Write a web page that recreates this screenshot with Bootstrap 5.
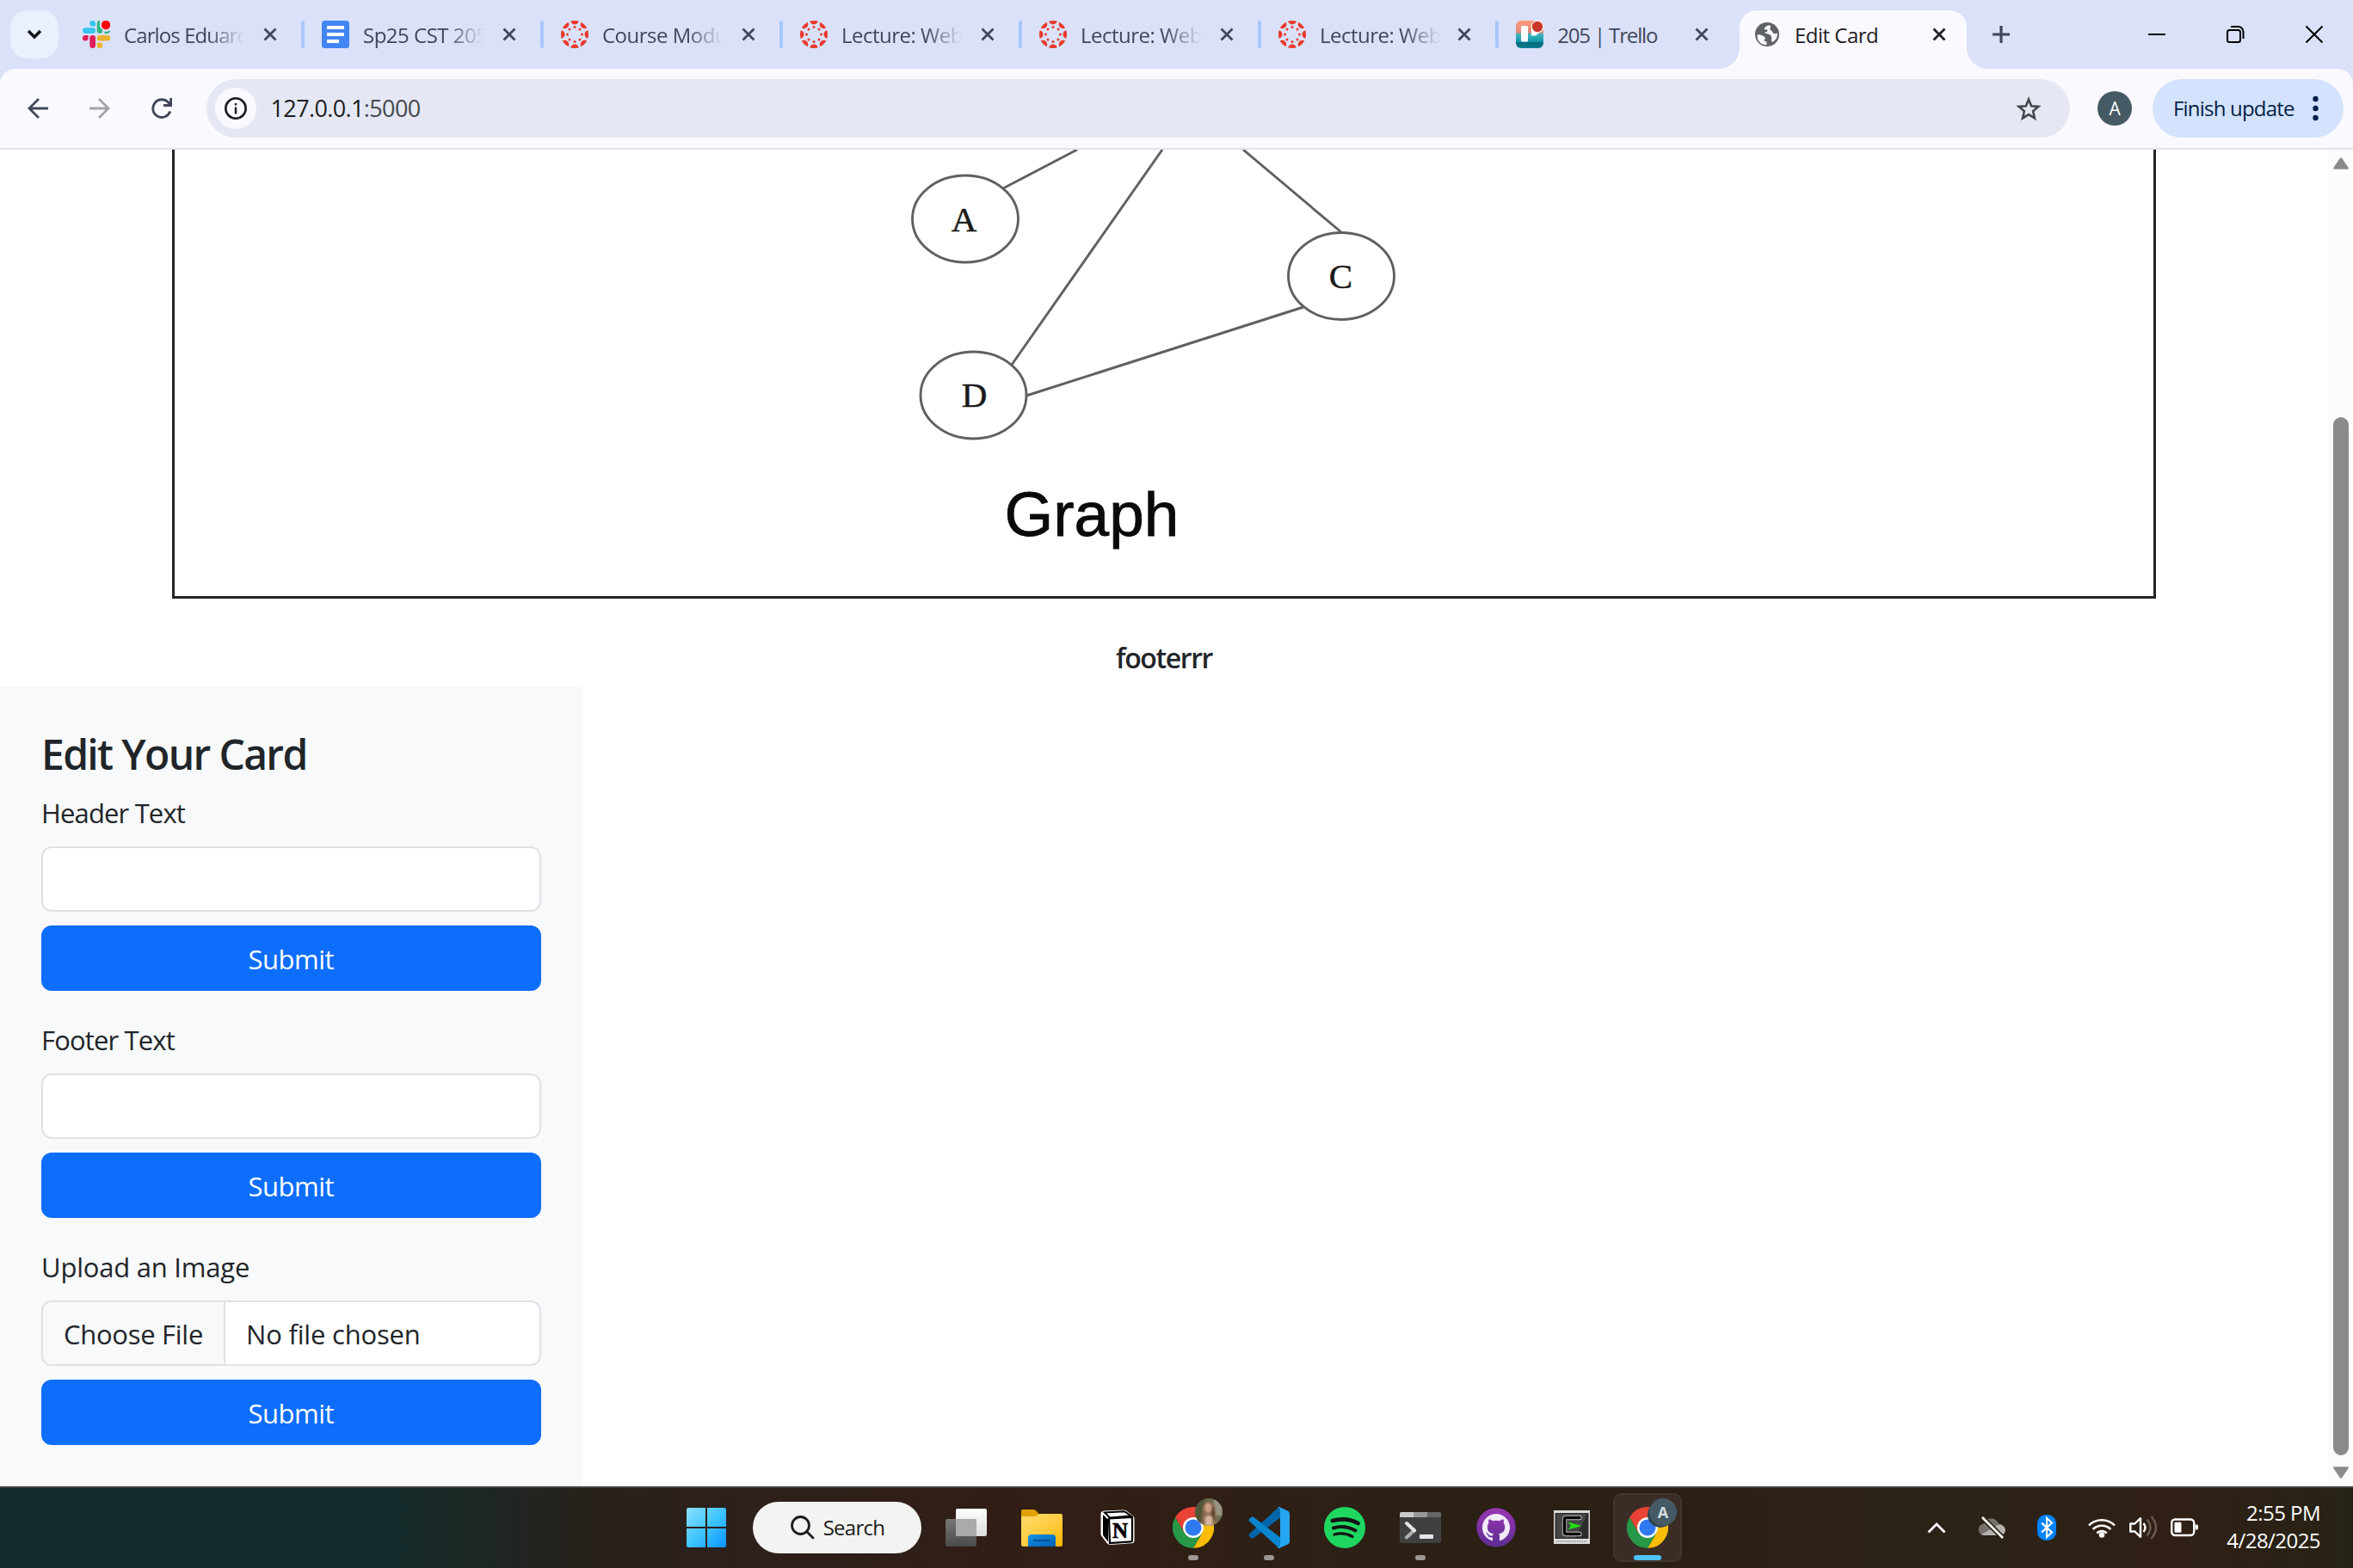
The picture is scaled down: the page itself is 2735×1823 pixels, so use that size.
<!DOCTYPE html>
<html lang="en">
<head>
<meta charset="utf-8">
<title>Edit Card</title>
<link rel="stylesheet" href="https://cdn.jsdelivr.net/npm/bootstrap@5.3.0/dist/css/bootstrap.min.css">
<script src="https://cdn.jsdelivr.net/npm/bootstrap@5.3.0/dist/js/bootstrap.bundle.min.js"></script>
<style>
html{font-size:32px}
body{width:2735px;height:1823px;overflow:hidden;font-family:"Open Sans","Noto Sans",sans-serif;font-size:31px;line-height:48px;letter-spacing:-.5px;color:#212529;background:#fff}
svg{display:block;flex:none}
/* tab strip */
.strip{height:80px;background:#dae1f9;font-size:24px;line-height:32px;letter-spacing:-.5px;color:#41475a}
.tabsearch{width:56px;height:56px;margin:0 8px 0 12px;border-radius:20px;background:#ebf0ff}
.btab{width:278px;padding-left:20px}
.btab .ttl{width:162px;margin-left:16px}
.btab.slim{width:276.2px}
.btab.slim .ttl{width:160.200px}
.ttl{white-space:nowrap;position:relative;top:1px}
.faded{-webkit-mask-image:linear-gradient(90deg,#000 98px,transparent 140px);mask-image:linear-gradient(90deg,#000 98px,transparent 140px)}
.tight{letter-spacing:-.9px}
.tsep{width:4px;height:32px;border-radius:2px;background:#a8c7fa}
.btab-on{width:264px;height:68px;margin:12px 0 0 3.600px;padding:0 24px 12px 16px;border-radius:20px 20px 0 0;background:#faf9ff;color:#1f2024;position:relative}
.btab-on::before,.btab-on::after{content:"";position:absolute;bottom:0;width:24px;height:24px}
.btab-on::before{left:-24px;background:radial-gradient(circle at 0 0,transparent 23.5px,#faf9ff 24px)}
.btab-on::after{right:-24px;background:radial-gradient(circle at 100% 0,transparent 23.5px,#faf9ff 24px)}
.newtab{margin-left:30px}
.winbtns{margin-right:35px;gap:71px}
/* toolbar */
.toolwrap{background:#dae1f9}
.toolbar{height:94px;background:#faf9ff;border-bottom:2px solid #e0e3ef;border-radius:18px 18px 0 0;padding:0 11px 0 32px;color:#41475a}
.navs{gap:48px;width:208px}
.omni{width:2166px;height:68px;border-radius:34px;background:#e5e8f4;padding:0 33px 0 10px;font-size:27px;letter-spacing:-.62px;color:#1b1c20}
.omni .port{color:#46474e}
.infodot{width:48px;height:48px;background:#faf9ff;margin-right:16.500px}
.ava{width:40px;height:40px;margin-left:32px;background:#455a64;color:#fff;font-size:21px}
.finish{width:222px;height:68px;border-radius:34px;margin-left:24px;background:#d3e3fd;color:#041e49;font-size:24px;letter-spacing:-.8px;padding:0 29px 0 24px}
/* page */
.viewport-row{height:1554px}
.pagecol{width:2706px}
.frame{width:2306px;height:522px;border:3px solid #212529;border-top:0}
.foot{font-size:32px;line-height:38.4px;font-weight:600;letter-spacing:-1.4px;padding-top:49.500px;margin-bottom:14.500px}
.editor{background:#f8f9fa}
.editor h2{font-size:48px;line-height:57.6px;font-weight:600;letter-spacing:-1.65px;padding-top:1.5px;margin-bottom:14.500px}
.editor .form-label{display:block;letter-spacing:-.85px;padding-top:1px;margin-bottom:15px}
.editor .form-control{font-size:31px;line-height:48px;border-width:2px;height:76px;padding-top:13px;padding-bottom:11px;letter-spacing:-.2px}
.editor .form-control::file-selector-button{letter-spacing:-.28px;border-inline-end-width:2px;padding-top:13px;padding-bottom:11px;margin-top:-13px;margin-bottom:-11px}
.editor .btn{font-size:31px;line-height:48px;border-width:2px;letter-spacing:-.5px;padding-top:13px;padding-bottom:11px}
.editor .lbl-up{letter-spacing:-.22px}
.sbar{width:29px;background:#fcfcfc;padding:9px 0}
.sthumb{width:18px;height:1207px;margin:288px 0 13px;border-radius:9px;background:#8b8b8b}
/* taskbar */
.taskbar{height:95px;border-top:2px solid #474441;color:#fff;background:linear-gradient(90deg,#152b2e 0,#132b2c 440px,#27211b 680px,#2e1f1b 900px,#311e14 1250px,#2c2015 1600px,#2b2015 2000px,#2b2317 2300px,#301f15 2520px,#262315 2735px);padding-left:777px;padding-bottom:1px;font-size:24px;line-height:32px}
.slot{width:88px;height:80px;position:relative}
.slot .pip{position:absolute;bottom:2px;left:38px;width:12px;height:6px;border-radius:3px;background:#9f9793}
.slot .pip-on{left:28px;width:32px;background:#4cc2ff}
.tile{width:80px;height:80px;border:2px solid #45362d;border-radius:10px;background:#3b2d25}
.sbox{width:196px;height:60px;border-radius:30px;background:#f3f3f1;color:#1b1b1b;letter-spacing:-.75px;padding-left:44px;margin:0 8px 0 10px}
.sbox span{margin-left:6px}
.tray{margin-left:281px}
.clock{width:142px;text-align:right;letter-spacing:-.55px;padding-bottom:3px}
</style>
</head>
<body class="d-flex flex-column">
<svg width="0" height="0" class="position-absolute">
<defs>
<symbol id="x" viewBox="0 0 16 16"><path d="M1.5 1.5l13 13M14.500 1.500l-13 13" stroke="currentColor" stroke-width="2.800" fill="none"/></symbol>
<symbol id="canvas" viewBox="0 0 32 32"><clipPath id="cc"><circle cx="16" cy="16" r="16"/></clipPath>
<g fill="#e8392b" clip-path="url(#cc)"><circle cx="16" cy="-.5" r="5"/><circle cx="16" cy="32.500" r="5"/><circle cx="-.5" cy="16" r="5"/><circle cx="32.500" cy="16" r="5"/><circle cx="4.300" cy="4.300" r="5"/><circle cx="27.700" cy="4.300" r="5"/><circle cx="4.300" cy="27.700" r="5"/><circle cx="27.700" cy="27.700" r="5"/>
<circle cx="16" cy="7.500" r="1.500"/><circle cx="16" cy="24.500" r="1.500"/><circle cx="7.500" cy="16" r="1.500"/><circle cx="24.500" cy="16" r="1.500"/><circle cx="10" cy="10" r="1.500"/><circle cx="22" cy="10" r="1.500"/><circle cx="10" cy="22" r="1.500"/><circle cx="22" cy="22" r="1.500"/></g></symbol>
<symbol id="chrome" viewBox="0 0 48 48"><path d="M24 24L3.200 12A24 24 0 0 1 44.800 12z" fill="#ea4335"/><path d="M24 12H44.800A24 24 0 0 1 24 48L34.400 30z" fill="#fbbc04"/><path d="M13.600 30L3.200 12A24 24 0 0 0 24 48L34.400 30 24 34z" fill="#279847"/><path d="M3.200 12l10.400 18L24 24V12z" fill="#ea4335"/><circle cx="24" cy="24" r="12" fill="#fff"/><circle cx="24" cy="24" r="9.500" fill="#2f7af0"/></symbol>
</defs></svg>

<div class="strip d-flex align-items-center">
  <div class="tabsearch d-flex align-items-center justify-content-center"><svg width="18" height="12" viewBox="0 0 18 12"><path d="M2 2l7 7 7-7" fill="none" stroke="#111318" stroke-width="3.500"/></svg></div>

  <div class="btab d-flex align-items-center"><svg width="32" height="32" viewBox="0 0 32 32"><g fill="#36c5f0"><rect x="0" y="8.300" width="15" height="6.600" rx="3.300"/><path d="M11.700 0a3.300 3.300 0 0 1 3.300 3.300v3.300h-3.300a3.300 3.300 0 0 1 0-6.600z"/></g><path d="M20 0a3.300 3.300 0 0 0-3.300 3.300v8.300a3.300 3.300 0 0 0 6.600 0L20 7zM25.400 15v-2.500c2 1 5 0 6.400-1.500A3.300 3.300 0 0 1 28.700 15z" fill="#2eb67d"/><g fill="#ecb22e"><rect x="16.700" y="17" width="15.300" height="6.600" rx="3.300"/><path d="M16.700 25.400H20a3.300 3.300 0 1 1-3.300 3.300z"/></g><g fill="#e01e5a"><rect x="8.300" y="17" width="6.700" height="15" rx="3.300"/><path d="M6.600 17v3.300A3.300 3.300 0 1 1 3.300 17z"/></g><circle cx="27" cy="5" r="6.300" fill="#dae1f9"/><circle cx="27" cy="5" r="5.200" fill="#f00"/></svg><div class="ttl faded tight">Carlos Eduard</div><svg width="16" height="16"><use href="#x"/></svg><div class="tsep ms-auto"></div></div>

  <div class="btab d-flex align-items-center"><svg width="32" height="32" viewBox="0 0 32 32"><rect width="32" height="32" rx="3.500" fill="#4285f4"/><path d="M6 8h20M6 16h20M6 24h14" stroke="#fff" stroke-width="4"/></svg><div class="ttl faded">Sp25 CST 205</div><svg width="16" height="16"><use href="#x"/></svg><div class="tsep ms-auto"></div></div>

  <div class="btab d-flex align-items-center"><svg width="32" height="32"><use href="#canvas"/></svg><div class="ttl faded">Course Modu</div><svg width="16" height="16"><use href="#x"/></svg><div class="tsep ms-auto"></div></div>

  <div class="btab d-flex align-items-center"><svg width="32" height="32"><use href="#canvas"/></svg><div class="ttl faded">Lecture: Web</div><svg width="16" height="16"><use href="#x"/></svg><div class="tsep ms-auto"></div></div>

  <div class="btab d-flex align-items-center"><svg width="32" height="32"><use href="#canvas"/></svg><div class="ttl faded">Lecture: Web</div><svg width="16" height="16"><use href="#x"/></svg><div class="tsep ms-auto"></div></div>

  <div class="btab slim d-flex align-items-center"><svg width="32" height="32"><use href="#canvas"/></svg><div class="ttl faded">Lecture: Web</div><svg width="16" height="16"><use href="#x"/></svg><div class="tsep ms-auto"></div></div>

  <div class="btab slim d-flex align-items-center"><svg width="32" height="32" viewBox="0 0 32 32"><defs><linearGradient id="tr" x2="0" y2="1"><stop offset="0" stop-color="#ff9a7b"/><stop offset=".42" stop-color="#e08a78"/><stop offset=".5" stop-color="#3fb5bd"/><stop offset=".78" stop-color="#0d93a8"/><stop offset=".8" stop-color="#04687a"/><stop offset="1" stop-color="#067f92"/></linearGradient></defs><rect width="32" height="32" rx="6" fill="url(#tr)"/><rect x="6" y="6" width="8" height="18.500" rx="1.500" fill="#fff"/><path d="M18 6h8v9q-2 2.500-5 2.500H18z" fill="#fff"/><circle cx="25" cy="7" r="7.300" fill="#fff"/><circle cx="25" cy="7" r="6.200" fill="#c9372c"/></svg><div class="ttl" style="letter-spacing:-1.15px">205 | Trello</div><svg width="16" height="16"><use href="#x"/></svg></div>

  <div class="btab-on d-flex align-items-center"><svg width="32" height="32" viewBox="0 0 32 32"><circle cx="16" cy="16" r="14" fill="#5f6368"/><path d="M4.500 16.500c3.500-.5 6 .5 8.500 2.500 2 1.500-.5 3-.5 4.500l3 1v3.800C8.500 28.500 4 23 4.500 16.500zM17.500 5.500c-2 .5-5 2.500-4.500 4.500 1 1.500 3-.5 3.500 1 0 2-1.500 2.500-3.500 3 1 1.500 5 .5 7.500 3.500 1.500 2-.5 5 1.500 7.500 4-2 6.500-6 5.800-10.500-2 1-4.800 1-5.300-1s-2.500-1.500-3-3.500 1.500-2.500 0-4.500z" fill="#faf9ff"/></svg><div class="ttl ms-2 me-auto">Edit Card</div><svg width="16" height="16"><use href="#x"/></svg></div>

  <svg class="newtab" width="20" height="20" viewBox="0 0 20 20"><path d="M10 0v20M0 10h20" stroke="#41475a" stroke-width="3.200"/></svg>
  <div class="winbtns ms-auto d-flex align-items-center">
    <svg width="20" height="20" viewBox="0 0 20 20"><path d="M0 10h20" stroke="#000" stroke-width="2"/></svg>
    <svg width="21" height="20" viewBox="0 0 21 20" fill="none" stroke="#000" stroke-width="2"><rect x="1" y="5" width="15" height="14" rx="2.500"/><path d="M5 1h8.500a6 6 0 0 1 6 6v8"/></svg>
    <svg width="20" height="20" viewBox="0 0 20 20"><path d="M.5.5l19 19M19.500.5l-19 19" stroke="#000" stroke-width="2"/></svg>
  </div>
</div>

<div class="toolwrap"><div class="toolbar d-flex align-items-center">
  <div class="navs d-flex">
    <svg width="24" height="24" viewBox="0 0 24 24" fill="none" stroke="#41475a" stroke-width="2.800"><path d="M24 12H2.500M13 1L2 12l11 11"/></svg>
    <svg width="24" height="24" viewBox="0 0 24 24" fill="none" stroke="#a3a4a9" stroke-width="2.800"><path d="M0 12h21.500M11 1l11 11-11 11"/></svg>
    <svg width="24" height="24" viewBox="0 0 24 24" fill="none" stroke="#41475a" stroke-width="2.900"><path d="M21.800 15.500A10.300 10.300 0 1 1 20 5.500l2.500 3M22.600 0v8.500H14"/></svg>
  </div>
  <div class="omni d-flex align-items-center">
    <div class="infodot rounded-circle d-flex align-items-center justify-content-center"><svg width="26" height="26" viewBox="0 0 26 26"><circle cx="13" cy="13" r="11.700" fill="none" stroke="#1b1c20" stroke-width="2.600"/><path d="M13 11.500v8M13 7v2.600" stroke="#1b1c20" stroke-width="2.400"/></svg></div>
    <div>127.0.0.1<span class="port">:5000</span></div>
    <svg class="ms-auto" width="30" height="29" viewBox="0 0 30 29"><path d="M15 3.500l3.100 7.700 8.300.7-6.300 5.400 1.900 8.100-7-4.300-7 4.300 1.900-8.100-6.300-5.400 8.300-.7z" fill="none" stroke="#46474e" stroke-width="2.600"/></svg>
  </div>
  <div class="ava rounded-circle d-flex align-items-center justify-content-center">A</div>
  <div class="finish d-flex align-items-center justify-content-between text-nowrap"><span>Finish update</span><svg width="7" height="30" viewBox="0 0 7 30" fill="#041e49"><circle cx="3.500" cy="4" r="3.200"/><circle cx="3.500" cy="15" r="3.200"/><circle cx="3.500" cy="26" r="3.200"/></svg></div>
</div></div>

<div class="viewport-row d-flex">
  <main class="pagecol">
    <div class="frame mx-auto">
      <svg width="2300" height="519" viewBox="203 174 2300 519">
        <g fill="none" stroke="#606060" stroke-width="2.900"><path d="M1252 174l-86 45M1351 174l-175 250M1445 174l114 96M1193 460l322-103"/><ellipse cx="1122" cy="254.500" rx="61.500" ry="50.500"/><ellipse cx="1559" cy="321" rx="61.500" ry="50.500"/><ellipse cx="1131.500" cy="459.500" rx="61.500" ry="50.500"/></g>
        <g font-family="Liberation Serif, serif" font-size="41" fill="#1a1a1a" stroke="#1a1a1a" stroke-width=".5" text-anchor="middle" letter-spacing="0"><text x="1120.500" y="269">A</text><text x="1558.500" y="334.500">C</text><text x="1132.500" y="473">D</text></g>
        <text x="1167.500" y="623" font-family="Liberation Sans, sans-serif" font-size="73" letter-spacing="0" fill="#0a0a0a" stroke="#0a0a0a" stroke-width=".8">Graph</text>
      </svg>
    </div>
    <h5 class="foot text-center">footerrr</h5>
    <section class="editor col-3 p-4">
      <h2>Edit Your Card</h2>
      <div class="mb-3"><label class="form-label">Header Text</label><input type="text" class="form-control"><button class="btn btn-primary w-100 mt-2">Submit</button></div>
      <div class="mb-3"><label class="form-label">Footer Text</label><input type="text" class="form-control"><button class="btn btn-primary w-100 mt-2">Submit</button></div>
      <div><label class="form-label lbl-up">Upload an Image</label><input type="file" class="form-control"><button class="btn btn-primary w-100 mt-2">Submit</button></div>
    </section>
  </main>
  <div class="sbar d-flex flex-column align-items-center">
    <svg width="18" height="14" viewBox="0 0 18 14"><path d="M9 1.500L16.500 12.500h-15z" fill="#8b8b8b" stroke="#8b8b8b" stroke-width="2.500" stroke-linejoin="round"/></svg>
    <div class="sthumb"></div>
    <svg width="18" height="14" viewBox="0 0 18 14"><path d="M9 12.500L16.500 1.500h-15z" fill="#8b8b8b" stroke="#8b8b8b" stroke-width="2.500" stroke-linejoin="round"/></svg>
  </div>
</div>

<footer class="taskbar d-flex align-items-center">
  <div class="slot d-flex align-items-center justify-content-center"><svg width="46" height="46" viewBox="0 0 46 46"><defs><linearGradient id="wn" gradientUnits="userSpaceOnUse" x1="0" y1="0" x2="46" y2="46"><stop offset="0" stop-color="#8ce0ff"/><stop offset=".5" stop-color="#3fc5ff"/><stop offset="1" stop-color="#0a94ff"/></linearGradient></defs><path d="M2 0h20v22H0V2q0-2 2-2zM24 0h20q2 0 2 2v20H24zM0 24h22v22H2q-2 0-2-2zM24 24h22v20q0 2-2 2H24z" fill="url(#wn)"/></svg></div>
  <div class="sbox d-flex align-items-center"><svg class="me-1" width="28" height="28" viewBox="0 0 28 28" fill="none" stroke="#1b1b1b" stroke-width="2.800" stroke-linecap="round"><circle cx="11.500" cy="11.500" r="10"/><path d="M18.500 18.500l7.500 7.500"/></svg><span class="ms-0 ps-0">&#8202;Search</span></div>

  <div class="slot d-flex align-items-center justify-content-center"><svg width="48" height="44" viewBox="0 0 48 44"><defs><linearGradient id="tv" x2="0" y2="1"><stop offset="0" stop-color="#fff"/><stop offset="1" stop-color="#dcdcdc"/></linearGradient><linearGradient id="tg" x2="0" y2="1"><stop offset="0" stop-color="#767676"/><stop offset="1" stop-color="#4b4b4b"/></linearGradient></defs><rect y="12" width="36" height="32" rx="2" fill="url(#tg)"/><rect x="12" width="36" height="32" rx="2" fill="url(#tv)"/><path d="M12 12h24v20H14q-2 0-2-2z" fill="#aaa"/></svg></div>

  <div class="slot d-flex align-items-center justify-content-center"><svg width="48" height="44" viewBox="0 0 48 44"><defs><linearGradient id="fo" x2="1" y2="1"><stop offset="0" stop-color="#ffdb6e"/><stop offset=".6" stop-color="#ffca38"/><stop offset="1" stop-color="#f5b400"/></linearGradient><linearGradient id="fb" x2="1" y2="1"><stop offset="0" stop-color="#1491e0"/><stop offset="1" stop-color="#0260b8"/></linearGradient></defs><path d="M0 3q0-2 2-2h12q2 0 4 2l3 4v6H0z" fill="#dfa000"/><path d="M0 9h15q2 0 4-1.500L21 6h25q2 0 2 2v34q0 2-2 2H2q-2 0-2-2z" fill="url(#fo)"/><path d="M8 44V34q0-4 4-4h24q4 0 4 4v10z" fill="url(#fb)"/><path d="M14 37h19" stroke="#084b91" stroke-width="2"/></svg></div>

  <div class="slot d-flex align-items-center justify-content-center"><svg width="40" height="42" viewBox="0 0 40 42"><path d="M4 1.500L27 .5q2 0 4 1.500l7 5.500q1.500 1 1.500 3V36q0 3-3 3.200L12 41q-3 .2-4.500-2L1.500 31Q.5 30 .5 28V5Q.5 2 4 1.500z" fill="#fff"/><path d="M3 6l6 5.500v26L3.500 30.500Q3 30 3 28z" fill="#000"/><path d="M5 3.500l22-1.300q1.500 0 3 1.300l5.500 4L11 9.500z" fill="#fff" stroke="#000" stroke-width="2"/><path d="M10 10.500l27-1.700V36q0 1.300-1.500 1.400L11 39z" fill="#fff" stroke="#000" stroke-width="2.200"/><text x="23" y="32.500" text-anchor="middle" font-family="Liberation Serif, serif" font-weight="700" font-size="25" fill="#000" stroke="#000" stroke-width=".7" letter-spacing="0">N</text></svg></div>

  <div class="slot d-flex align-items-center justify-content-center"><svg width="48" height="48"><use href="#chrome"/></svg>
    <svg class="position-absolute" style="left:46px;top:6px" width="32" height="32" viewBox="0 0 32 32"><defs><clipPath id="ph"><circle cx="16" cy="16" r="16"/></clipPath><filter id="bl"><feGaussianBlur stdDeviation="1.100"/></filter></defs><g clip-path="url(#ph)"><rect width="32" height="32" fill="#69684e"/><g filter="url(#bl)"><path d="M0 0h12v32H0z" fill="#505437"/><path d="M22 0h10v20H22z" fill="#9a9580"/><path d="M9 12q0-8 7-8t8 10l2 18H7z" fill="#8a6d50"/><ellipse cx="15.500" cy="11" rx="4" ry="5.500" fill="#cfa184"/><path d="M12 22q4-4 8 0v10h-8z" fill="#d8b5a1"/><path d="M20 7q5 9 2 20l-3-8z" fill="#5d4033"/></g></g></svg><span class="pip"></span></div>

  <div class="slot d-flex align-items-center justify-content-center"><svg width="48" height="48" viewBox="0 0 48 48"><path d="M35 .5L1 31.500Q0 32.500 1 34l2.500 2.300q1.200 1 2.500 0L47 5z" fill="#0065a9"/><path d="M35 47.500L1 16.500Q0 15 1 14l2.500-2.300q1.200-1 2.500 0L47 43z" fill="#0a85cf"/><path d="M36 0l10.500 5Q48 6 48 8v32q0 2-1.500 3L36 48q-1.500.2-2-1 3 0 3-3V4q0-3-3-3.200Q34.500-.2 36 0z" fill="#26a6f0"/><path d="M36 14v20L22.500 24z" fill="#2e2016"/></svg><span class="pip"></span></div>

  <div class="slot d-flex align-items-center justify-content-center"><svg width="48" height="48" viewBox="0 0 48 48"><circle cx="24" cy="24" r="24" fill="#1fd760"/><g fill="none" stroke="#141414" stroke-linecap="round"><path d="M10 16q16-4.500 29.500 3" stroke-width="4.800"/><path d="M11 24.500q13-4 25.500 3" stroke-width="4"/><path d="M12 32q11-3 21 2.500" stroke-width="3.200"/></g></svg></div>

  <div class="slot d-flex align-items-center justify-content-center"><svg width="48" height="36" viewBox="0 0 48 36"><rect width="48" height="36" rx="2" fill="#404040"/><path d="M2 0h14v6H0V2q0-2 2-2z" fill="#ccc"/><path d="M16 0h16v6H16z" fill="#999"/><path d="M32 0h14q2 0 2 2v4H32z" fill="#666"/><path d="M8 29.500L17 21" stroke="#b0b0b0" stroke-width="4" stroke-linecap="round"/><path d="M8 13l9 8.500" stroke="#e6e6e6" stroke-width="4" stroke-linecap="round"/><rect x="23" y="26" width="16" height="5" rx="1" fill="#e6e6e6"/></svg><span class="pip"></span></div>

  <div class="slot d-flex align-items-center justify-content-center"><svg width="46" height="46" viewBox="0 0 46 46"><defs><linearGradient id="gh" x2="0" y2="1"><stop offset="0" stop-color="#9a36b4"/><stop offset="1" stop-color="#5b2d91"/></linearGradient></defs><circle cx="23" cy="23" r="22.700" fill="url(#gh)"/><g transform="translate(7 7) scale(2)"><path d="M8 0C3.580 0 0 3.580 0 8c0 3.540 2.290 6.530 5.470 7.590.4.070.55-.17.55-.38 0-.19-.01-.82-.01-1.490-2.010.37-2.530-.49-2.690-.94-.09-.23-.48-.94-.82-1.130-.28-.15-.68-.52-.01-.53.63-.01 1.080.58 1.230.82.72 1.210 1.870.87 2.330.66.07-.52.28-.87.51-1.070-1.780-.2-3.640-.89-3.640-3.950 0-.87.31-1.590.82-2.150-.08-.2-.36-1.020.08-2.120 0 0 .67-.21 2.200.82.64-.18 1.320-.27 2-.27s1.360.09 2 .27c1.530-1.040 2.200-.82 2.200-.82.44 1.100.16 1.920.08 2.120.51.56.82 1.270.82 2.150 0 3.070-1.870 3.750-3.650 3.950.29.25.54.73.54 1.480 0 1.070-.01 1.930-.01 2.200 0 .21.15.46.55.38A8.010 8.010 0 0 0 16 8c0-4.420-3.580-8-8-8z" fill="#f0ebf5"/></g></svg></div>

  <div class="slot d-flex align-items-center justify-content-center"><svg width="42" height="40" viewBox="0 0 42 40"><path d="M0 0h42v39H0z" fill="#dcdcda"/><path d="M1.500 3h39v30h-39z" fill="#2b2c2b"/><path d="M3 4h36l-14 28H3z" fill="#454645"/><path d="M3 36h36" stroke="#999" stroke-width="2" stroke-dasharray="1 1"/><path d="M30 8.500H14.500q-2 0-2 2v15q0 2 2 2H30" fill="none" stroke="#c4c4c4" stroke-width="5.400" stroke-linecap="round"/><path d="M30 8.500H14.500q-2 0-2 2v15q0 2 2 2H30" fill="none" stroke="#050505" stroke-width="3.600" stroke-linecap="round"/><path d="M16.500 13.500L32.500 18l-16 4.500 3.500-4.500z" fill="#21e015"/></svg></div>

  <div class="slot d-flex align-items-center justify-content-center"><div class="tile d-flex align-items-center justify-content-center"><svg width="48" height="48"><use href="#chrome"/></svg></div>
    <svg class="position-absolute" style="left:44px;top:6px" width="34" height="36" viewBox="0 0 34 36"><circle cx="15" cy="19" r="15" fill="#31444d"/><circle cx="18" cy="16" r="16" fill="#455a64"/><text x="18" y="22.500" text-anchor="middle" font-size="18" font-weight="700" fill="#d5dcdf" letter-spacing="0">A</text></svg><span class="pip pip-on"></span></div>

  <div class="tray d-flex align-items-center">
    <svg width="22" height="13" viewBox="0 0 22 13"><path d="M1.500 11.500L11 2l9.500 9.500" fill="none" stroke="#fff" stroke-width="2.800"/></svg>
    <svg style="margin-left:37px" width="32" height="28" viewBox="0 0 32 28"><path d="M7 23a6.800 6.800 0 0 1-.5-13.500A9.500 9.500 0 0 1 24 9.200 7 7 0 0 1 25 23z" fill="#75706a"/><path d="M4 22L20 13a7 7 0 0 1 12 3.500Q32 23 25 23H7q-2 0-3-1z" fill="#b5b1ac"/><path d="M5 2l24 24" stroke="#2b2317" stroke-width="6"/><path d="M5 2l24 24" stroke="#fff" stroke-width="2.600"/></svg>
    <svg style="margin-left:37px" width="22" height="30" viewBox="0 0 22 30"><rect width="22" height="30" rx="10" fill="#0082fc"/><path d="M5 9.500l12 11-6 5.500V4l6 5.500-12 11" fill="none" stroke="#fff" stroke-width="2.200"/></svg>
    <svg style="margin-left:37px" width="32" height="24" viewBox="0 0 32 24" fill="none" stroke="#fff" stroke-width="2.500"><path d="M1 9.500a21 21 0 0 1 30 0M5.700 14a14.500 14.500 0 0 1 20.600 0M10.300 18.500a8 8 0 0 1 11.400 0"/><circle cx="16" cy="20.500" r="2" fill="#fff"/></svg>
    <svg class="ms-2" width="32" height="28" viewBox="0 0 32 28" fill="none" stroke="#fff" stroke-width="2.400" stroke-linejoin="round"><path d="M1.300 9.500h5L13 3.200v21.600l-6.700-6.300h-5z"/><path d="M16.500 9q4 5 0 10"/><path d="M20.500 4.500q8 9.500 0 19M25.500 1q11 13 0 26" stroke="#6b5d54"/></svg>
    <svg class="ms-2" width="32" height="22" viewBox="0 0 32 22"><rect x="1.200" y="1.500" width="26" height="18.500" rx="4" fill="none" stroke="#fff" stroke-width="2.400"/><path d="M28.500 7.500h2q1.500 0 1.500 1.500v3q0 1.500-1.500 1.500h-2z" fill="#fff"/><rect x="4.500" y="4.800" width="8" height="12" rx="1" fill="#fff"/></svg>
    <div class="clock">2:55 PM<br>4/28/2025</div>
  </div>
</footer>
</body>
</html>
